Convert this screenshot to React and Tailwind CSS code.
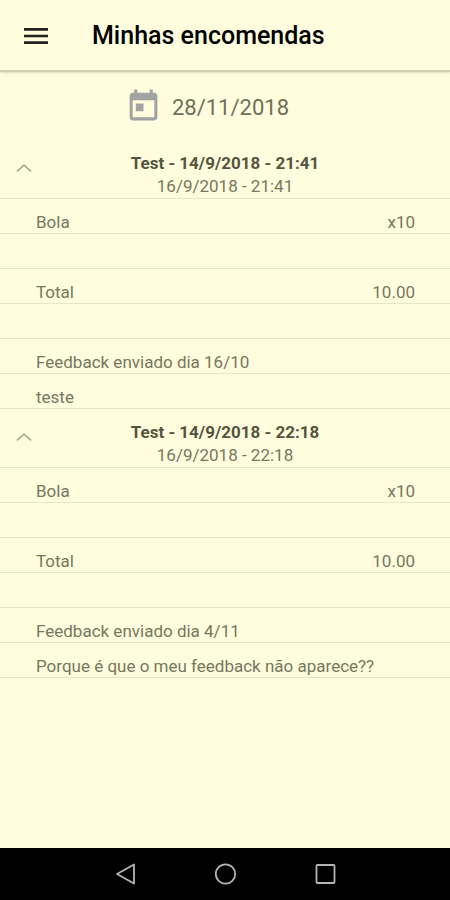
import React from 'react';
import { MdMenu, MdToday } from 'react-icons/md';

const orders = [
    {
        id: 1,
        title: 'Test - 14/9/2018 - 21:41',
        delivery: '16/9/2018 - 21:41',
        items: [{ name: 'Bola', quantity: 10 }],
        total: '10.00',
        feedbackDate: '16/10',
        feedback: 'teste',
    },
    {
        id: 2,
        title: 'Test - 14/9/2018 - 22:18',
        delivery: '16/9/2018 - 22:18',
        items: [{ name: 'Bola', quantity: 10 }],
        total: '10.00',
        feedbackDate: '4/11',
        feedback: 'Porque é que o meu feedback não aparece??',
    },
];

const Row = ({ label, value }) => (
    <div className="flex h-[35px] items-end justify-between border-b border-[#e6e5c9] pl-9 pr-[35px] text-[17px] leading-[22px] text-[#77775f]">
        <span>{label}</span>
        <span>{value}</span>
    </div>
);

const Order = ({ order }) => (
    <section>
        <button type="button" aria-expanded="true" className="relative block w-full border-b border-[#e6e5c9] pt-3 text-center text-[17px] leading-[23px] text-[#77775f]">
            <svg viewBox="0 0 16 8" className="absolute left-4 top-6 h-2 w-4" fill="none" stroke="#a5a58c" strokeWidth="1.6">
                <path d="M1 7.3 8 1.2l7 6.1" />
            </svg>
            <span className="block font-bold text-[#55553f]">{order.title}</span>
            <span className="block">{order.delivery}</span>
        </button>

        {order.items.map(item => (
            <Row key={item.name} label={item.name} value={`x${item.quantity}`} />
        ))}
        <Row />
        <Row label="Total" value={order.total} />
        <Row />
        <Row label={`Feedback enviado dia ${order.feedbackDate}`} />
        <Row label={order.feedback} />
    </section>
);

const App = () => {
    return (
        <div className="flex min-h-screen flex-col bg-[#fffddd] font-['Roboto',sans-serif]">
            <header className="flex h-[72px] items-center gap-10 border-b-2 border-[#d0d0b2] px-5 pt-0.5 shadow-sm">
                <button type="button" aria-label="Menu" className="text-[#22221c]">
                    <MdMenu className="size-8" />
                </button>
                <h1 className="text-[25px] font-medium text-black">Minhas encomendas</h1>
            </header>

            <main className="flex-1">
                <button type="button" className="mx-auto flex h-[68px] items-center gap-2.5 pr-9 text-[22px] text-[#6f6f5a]">
                    <MdToday className="size-[37px] text-[#a3a3a3]" />
                    <span className="pt-0.5">28/11/2018</span>
                </button>

                {orders.map(order => (
                    <Order key={order.id} order={order} />
                ))}
            </main>

            <nav className="flex h-[52px] items-center justify-center gap-[76px] bg-black text-[#b4b4b4]">
                <button type="button" aria-label="Voltar">
                    <svg viewBox="0 0 24 24" className="size-6" fill="none" stroke="currentColor" strokeWidth="1.8" strokeLinejoin="round">
                        <path d="M21 2.500v19L4 12z" />
                    </svg>
                </button>
                <button type="button" aria-label="Início">
                    <svg viewBox="0 0 24 24" className="size-6" fill="none" stroke="currentColor" strokeWidth="1.8">
                        <circle cx="12.500" cy="12" r="9.700" />
                    </svg>
                </button>
                <button type="button" aria-label="Aplicações recentes">
                    <svg viewBox="0 0 24 24" className="size-6" fill="none" stroke="currentColor" strokeWidth="1.8">
                        <rect x="3.500" y="3" width="18" height="18" rx="1" />
                    </svg>
                </button>
            </nav>
        </div>
    );
};

export default App;
